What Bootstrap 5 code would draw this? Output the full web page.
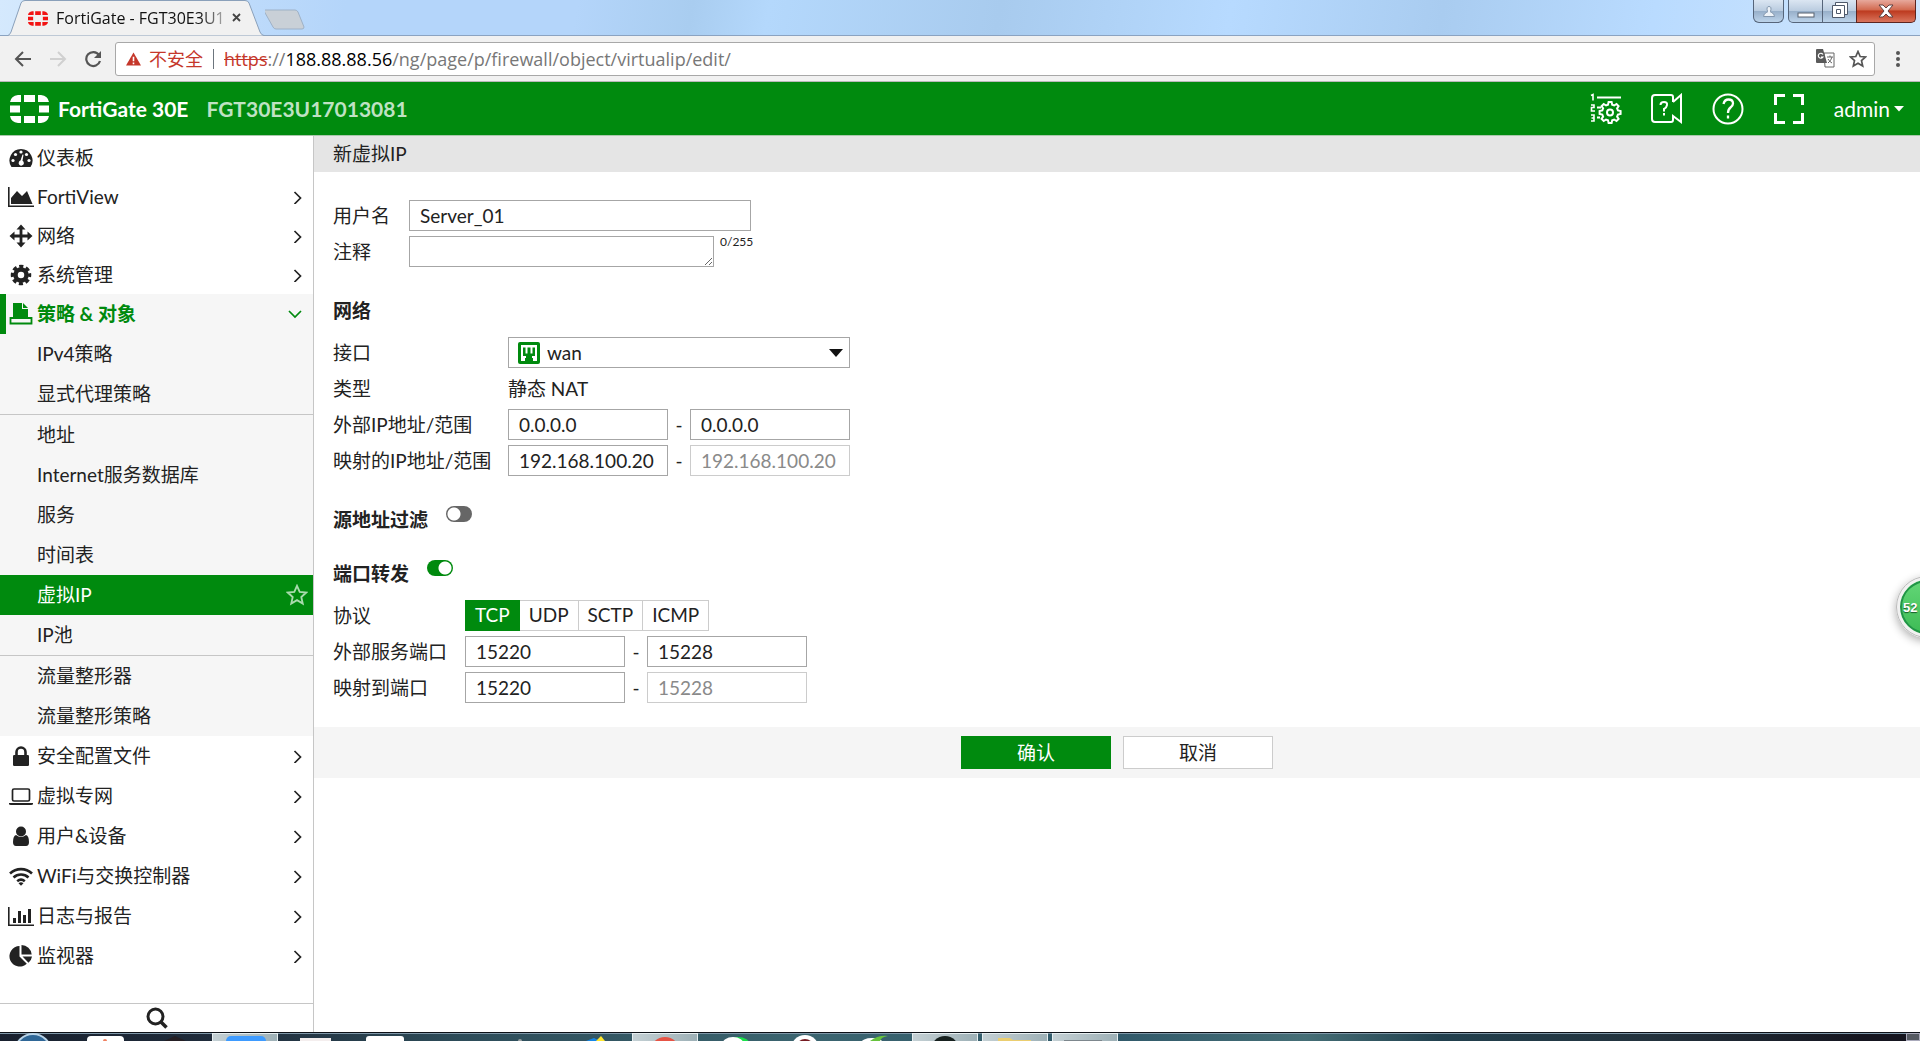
<!DOCTYPE html>
<html lang="zh-CN">
<head>
<meta charset="utf-8">
<meta name="viewport" content="width=device-width, initial-scale=1">
<title>FortiGate - FGT30E3U17013081</title>
<link href="https://cdn.jsdelivr.net/npm/bootstrap@5.3.0/dist/css/bootstrap.min.css" rel="stylesheet">
<style>
:root{--fg:#008a0e;--ink:#222;--line:#c6c6c6}
body{font-family:Lato,"Noto Sans CJK SC",sans-serif;font-size:19px;line-height:24px;color:var(--ink)}
svg{display:block;flex:none}
button{font-family:inherit}
/* browser chrome */
.chrome-ui{font-family:"Open Sans","Noto Sans CJK SC",sans-serif}
.tab-strip{height:36px;background:linear-gradient(100deg,#d5e9fd 0,#b4d5fa 18%,#b4d5fa 30%,#a9cdf0 36%,#b4d8fc 40%,#a8cbee 52%,#b7daff 64%,#a9ccf0 75%,#b9dbff 86%,#d0e6fd 100%);border-bottom:1px solid #8ba3c1}
.browser-tab{width:258px;height:36px;margin-left:7px;margin-bottom:-1px}
.browser-tab>svg:first-child{left:0;top:0}
.tab-title{font-size:16px;color:#111;white-space:nowrap;width:167px;-webkit-mask-image:linear-gradient(90deg,#000 86%,#0005 100%)}
.win-btn{height:23px;border:1px solid #56657a;border-top:0;background:linear-gradient(#dbe6f2,#b9cbdf 50%,#97afc9 51%,#bcd3ea);padding:0}
.win-close{background:linear-gradient(#e7a99c,#d2694f 45%,#bd3a1f 50%,#d9745c);border-color:#5c2520;width:60px;border-radius:0 0 5px 0}
.tool-bar{height:46px;background:#f1f1f1;border-bottom:1px solid #b9b9b9}
.address-box{height:34px;border:1px solid #a8a8a8;border-radius:3px;font-size:18px;background:#fff}
.plain-btn{border:0;background:none;padding:0;color:inherit}
/* product header */
.top-head{height:54px;background:var(--fg);border-bottom:1px solid #a9c8ab;color:#fff;font-size:21px}
.serial{color:#bfe2c3}
/* sidebar */
.side{width:314px;border-right:1px solid var(--line);background:#fff}
.side a{color:var(--ink);text-decoration:none;display:flex;align-items:center;height:40px;white-space:nowrap}
.side a.top-item{padding:0 11px 0 8px}
.side .first-items{padding-top:2px}
.side .first-items a{height:39px}
.ico{width:26px;height:26px;margin-right:3px}
.side .sub-items{background:#f6f6f6}
.side .sub-items a{padding-left:37px}
.side .sub-items ul+ul{border-top:1px solid var(--line)}
.side a.open-item{background:#f6f6f6;color:var(--fg);font-weight:700;border-left:6px solid var(--fg);padding-left:2px}
.side .sub-items a.current{background:var(--fg);color:#fff;padding-right:5px}
.side-search{height:29px}
/* content */
.page-title{height:36px;background:#e5e5e5;padding:0 19px;font-size:19px;font-weight:400}
.form-body{padding:28px 19px 24px}
.frow{display:flex;align-items:center;min-height:31px;margin-bottom:5px}
.frow>.lbl{flex:none}
.g1 .lbl{width:76px}.g2 .lbl{width:175px}.g3 .lbl{width:132px}
.fld{height:31px;border:1px solid #a6a6a6;border-radius:0;padding:0 10px;font-size:19px;color:var(--ink);background:#fff;line-height:24px}
.fld:disabled{border-color:#ccc;color:#8a8a8a;background:#fff;-webkit-text-fill-color:#8a8a8a;opacity:1}
.w-long{width:342px}.w-half{width:160px}
.fld-note{width:305px;height:31px;resize:both}
.count{font-size:12px;line-height:12px;margin-left:6px}
.dash{width:22px;text-align:center}
.sect{font-size:19px;line-height:28px;font-weight:700;margin:0}
.gap-sect{margin-top:30px}
.gap-switch{margin-top:26px}
select.fld{appearance:none;padding-left:38px}
.sel-ico{left:10px;top:5px}.sel-caret{right:7px;top:12px}
.tog.tog{appearance:none;width:26px;height:16px;border-radius:8px;background:radial-gradient(circle at 8px 8px,#fff 6px,#666 7px);margin:0 0 0 18px}
.tog.tog:checked{background:radial-gradient(circle at 18px 8px,#fff 6px,var(--fg) 7px)}
.proto .btn{height:31px;border:1px solid #ccc;border-radius:0;font-size:19px;line-height:24px;padding:2px 9px;color:var(--ink);background:#fff}
.proto .btn-check:checked+.btn{background:var(--fg);border-color:var(--fg);color:#fff}
.foot-bar{height:51px;background:#f5f5f5;gap:12px}
.foot-bar .btn{width:150px;height:33px;border-radius:0;font-size:19px;line-height:24px;padding:0}
.btn-ok{background:var(--fg);color:#fff}.btn-no{background:#fff;border:1px solid #ccc;color:var(--ink)}
/* floating meter and task bar */
.meter{right:-38px;top:576px;width:62px;height:62px;border-radius:50%;border:4px solid #f1f1f1;outline:1px solid #bbb;outline-offset:-1px;background:linear-gradient(#63d777,#3dbb55);box-shadow:0 3px 10px #0005,inset 0 0 0 2px #219447;color:#fff;font:700 13px "Liberation Sans",sans-serif;text-align:left;padding:0 0 0 3px;text-shadow:0 1px 1px #165b28}
.task-bar{height:9px;background:linear-gradient(90deg,#18202e 0,#202d3c 12%,#2d4c59 24%,#3b6570 42%,#30596a 58%,#456e76 68%,#21404e 75%,#23323d 86%,#15151f 97%);border-top:1px solid #0c1016;box-shadow:inset 0 1px #7f97a8}
.task-bar button{width:66px;height:8px;margin:0 2px;padding:0;background:none;border:0}
.task-bar button.run{background:linear-gradient(90deg,#c4d0d4,#9db0b6);border:1px solid #e6eef0;border-bottom:0}
.task-bar button.run svg{margin-left:-1px}
.task-bar button.desk{width:14px;margin:0 0 0 auto;background:#555a62;border:1px solid #aab}
</style>
<script src="https://cdn.jsdelivr.net/npm/bootstrap@5.3.0/dist/js/bootstrap.bundle.min.js"></script>
</head>
<body class="vh-100 d-flex flex-column overflow-hidden position-relative">
<svg width="0" height="0" class="position-absolute" aria-hidden="true">
  <symbol id="chev" viewBox="0 0 10 14"><path d="M2.500 2l6 6-6 6" fill="none" stroke="#222" stroke-width="1.700"/></symbol>
  <symbol id="forti" viewBox="0 0 39 28"><path d="M8 0h3v7H0Q1 1 8 0zM14 0h11v7H14zM28 0h3q7 1 8 7H28zM0 10.500h10v7H0zM29 10.500h10v7H29zM0 21h11v7H8q-7-1-8-7zM14 21h11v7H14zM28 21h11q-1 6-8 7h-3z" fill="currentColor"/></symbol>
</svg>

<div class="chrome-ui flex-shrink-0">
  <div class="tab-strip d-flex align-items-start">
    <div class="browser-tab position-relative d-flex align-items-center flex-shrink-0">
      <svg class="position-absolute" width="258" height="36"><path d="M0 36Q3 35 4 32L14 3Q15 .5 18 .5H238Q241 .5 242 3L253 32Q254 35 258 36z" fill="#f1f1f1" stroke="#8aa0ba"/></svg>
      <div class="position-relative d-flex align-items-center" style="padding-left:21px">
        <svg width="20" height="15"><use href="#forti" style="color:#f21313"/></svg>
        <span class="tab-title ms-2">FortiGate - FGT30E3U1</span>
        <button class="plain-btn ms-2" aria-label="关闭标签页"><svg width="12" height="12"><path d="M2 2l7 7M9 2l-7 7" stroke="#444" stroke-width="1.800"/></svg></button>
      </div>
    </div>
    <button class="plain-btn pt-2" aria-label="新标签页"><svg width="42" height="22"><path d="M1 2h30q2 0 3 2l6 15q0 2-2 2H12q-2 0-3-2L0 3z" transform="translate(-1)" fill="#c9d0d7" stroke="#9eb1c6"/></svg></button>
    <div class="ms-auto d-flex me-1">
      <button class="win-btn rounded-bottom me-1" style="width:31px" aria-label="用户"><svg class="mx-auto" width="14" height="14"><path d="M1.500 12.500q0-3 3-4 1 0 1-1-1.500-5 1.500-5t1.500 5q0 1 1 1 3 1 3 4z" fill="#eef3f8" stroke="#8296ad"/></svg></button>
      <button class="win-btn" style="width:35px;border-radius:0 0 0 5px" aria-label="最小化"><svg class="mx-auto" width="18" height="18"><rect x="1" y="11" width="16" height="4" fill="#fff" stroke="#56606e"/></svg></button>
      <button class="win-btn border-start-0 border-end-0" style="width:33px" aria-label="还原"><svg class="mx-auto" width="20" height="20"><path d="M5.500 1.500h12v12h-12z" fill="#fff" stroke="#4f596a"/><path d="M2.500 4.500h12v12h-12zM6.500 8.500h4v4h-4z" fill="#fff" stroke="#4f596a"/></svg></button>
      <button class="win-btn win-close" aria-label="关闭"><svg class="mx-auto" width="18" height="18"><path d="M2 3h4l3 3 3-3h4l-5 6 5 6h-4l-3-3-3 3H2l5-6z" fill="#fff" stroke="#5e4040"/></svg></button>
    </div>
  </div>
  <div class="tool-bar d-flex align-items-center">
    <button class="plain-btn" style="margin-left:14px" aria-label="后退"><svg width="18" height="18"><path d="M17 9H2M9 2L2 9l7 7" fill="none" stroke="#555" stroke-width="2"/></svg></button>
    <button class="plain-btn" style="margin-left:18px" disabled aria-label="前进"><svg width="18" height="18"><path d="M0 9h15M8 2l7 7-7 7" fill="none" stroke="#d0d0d0" stroke-width="2"/></svg></button>
    <button class="plain-btn" style="margin-left:16px" aria-label="重新加载"><svg width="18" height="18"><path d="M15 5A7 7 0 1 0 16 11" fill="none" stroke="#555" stroke-width="2.200"/><path d="M17 1v7h-7z" fill="#555"/></svg></button>
    <div class="address-box d-flex align-items-center flex-grow-1 ps-2" style="margin-left:13px">
      <svg style="margin:0 8px 0 2px" width="15" height="14" viewBox="0 0 17 15"><path d="M8.500 0L17 15H0z" fill="#c5372a"/><path d="M8.500 5v5M8.500 11.500v2" stroke="#fff" stroke-width="1.800"/></svg>
      <span style="color:#c5372a">不安全</span>
      <span class="border-start border-secondary" style="height:20px;margin:0 10px"></span>
      <span class="text-nowrap" style="color:#777"><s style="color:#c5372a">https</s>://<span class="text-black">188.88.88.56</span>/ng/page/p/firewall/object/virtualip/edit/</span>
      <button class="plain-btn ms-auto" aria-label="翻译"><svg width="19" height="19"><path d="M8 4h10v14H9z" fill="#fff" stroke="#666"/><path d="M1 0h6l4 14H1q-1 0-1-1V1q0-1 1-1z" fill="#5a5a5a"/><path d="M7 5.500A2.500 2.500 0 1 0 7 8H5" fill="none" stroke="#fff" stroke-width="1.200"/><path d="M11 8h6M14 6.500V8M16 8q-1 4-4 6M12 10q2 3 4 4" fill="none" stroke="#666"/></svg></button>
      <button class="plain-btn" style="margin:0 7px 0 14px" aria-label="收藏"><svg width="18" height="18" viewBox="0 0 18 18"><path d="M9 1.500l2.200 5 5.300.5-4 3.600 1.200 5.400L9 13.200 4.300 16l1.200-5.400-4-3.600 5.300-.5z" fill="none" stroke="#555" stroke-width="1.700"/></svg></button>
    </div>
    <button class="plain-btn" style="margin:0 19px 0 20px" aria-label="菜单"><svg width="6" height="18" fill="#555"><circle cx="3" cy="3" r="2"/><circle cx="3" cy="9" r="2"/><circle cx="3" cy="15" r="2"/></svg></button>
  </div>
</div>

<header class="top-head d-flex align-items-center flex-shrink-0 fw-bold">
  <svg style="margin-left:10px" width="39" height="28"><use href="#forti"/></svg>
  <span style="margin-left:9px">FortiGate 30E</span>
  <span class="serial" style="margin-left:18px">FGT30E3U17013081</span>
  <div class="ms-auto d-flex align-items-center" style="gap:29px;margin-right:16px">
    <button class="plain-btn" aria-label="设置"><svg width="32" height="32" viewBox="0 0 32 32" fill="none" stroke="#fff"><path d="M7 4.500h24M7 14.500h4M7 24.500h3" stroke-width="2"/><path d="M1 2.500l2-1v6M1 12h3v2.500H1.500V18H5M1 22h3v6H1M1.500 25H4" stroke-width="1.600"/><path d="M18.600 9h3l.6 2.700 2 .8 2.300-1.500 2.100 2.100-1.500 2.300.8 2 2.700.6v3l-2.700.6-.8 2 1.500 2.300-2.100 2.100-2.300-1.500-2 .8-.6 2.700h-3l-.6-2.700-2-.8-2.300 1.500-2.100-2.100 1.500-2.300-.8-2-2.700-.6v-3l2.700-.6.8-2-1.500-2.300 2.100-2.100 2.300 1.500 2-.8z" stroke-width="2"/><circle cx="20" cy="19.500" r="3" stroke-width="2"/></svg></button>
    <button class="plain-btn" aria-label="视频帮助"><svg width="32" height="32" viewBox="0 0 32 32" fill="none" stroke="#fff" stroke-width="2"><path d="M22 9V4q0-2-2-2H4Q1 2 1 5v21q0 3 3 3h16q2 0 2-2v-4l8 6V2l-8 7"/><path d="M9.500 12q0-3 3.500-3t3 3-3 4v2.500M13 20v2.500"/></svg></button>
    <button class="plain-btn" aria-label="帮助"><svg width="32" height="32" viewBox="0 0 32 32" fill="none" stroke="#fff" stroke-width="2"><circle cx="16" cy="16" r="14.500"/><path d="M11.500 11q1-4.500 5-4.500 4.500 0 4.500 4 0 2-2.500 4T16 20M16 22.500v3" stroke-width="2.300"/></svg></button>
    <button class="plain-btn" aria-label="全屏"><svg width="32" height="32" viewBox="0 0 32 32" fill="none" stroke="#fff" stroke-width="3"><path d="M2.500 12V2.500H12M20 2.500h9.500V12M29.500 20v9.500H20M12 29.500H2.500V20"/></svg></button>
    <button class="plain-btn d-flex align-items-center">admin<svg class="ms-1" width="10" height="6"><path d="M0 0h10L5 5.500z" fill="#fff"/></svg></button>
  </div>
</header>

<div class="d-flex flex-grow-1 overflow-hidden">
  <nav class="side d-flex flex-column flex-shrink-0" aria-label="主导航">
    <div class="first-items">
      <a class="top-item" href="#"><svg class="ico" viewBox="0 0 26 26"><path d="M13 4A11.500 11.500 0 0 0 3.500 22h19A11.500 11.500 0 0 0 13 4z" fill="#222"/><g fill="#fff"><circle cx="5" cy="15.500" r="1.600"/><circle cx="7.500" cy="9.500" r="1.600"/><circle cx="13" cy="7" r="1.600"/><circle cx="18.500" cy="9.500" r="1.600"/><circle cx="21" cy="15.500" r="1.600"/><path d="M14.500 9.500l1 .3-1 6a2.600 2.600 0 1 1-2-.2z"/></g></svg>仪表板</a>
      <a class="top-item" href="#"><svg class="ico" viewBox="0 0 26 26"><path d="M.8 3v19.200H26" fill="none" stroke="#222" stroke-width="1.600"/><path d="M3 20v-6l6-7 5 5 5-5 5.500 13z" fill="#222"/></svg>FortiView<svg class="ms-auto" width="10" height="14"><use href="#chev"/></svg></a>
      <a class="top-item" href="#"><svg class="ico" viewBox="0 0 26 26"><path d="M13 4v18M4 13h18" stroke="#222" stroke-width="2.800"/><path d="M13 1.500l4.500 5h-9zM13 24.500l4.500-5h-9zM1.500 13l5-4.500v9zM24.500 13l-5-4.500v9z" fill="#222"/></svg>网络<svg class="ms-auto" width="10" height="14"><use href="#chev"/></svg></a>
      <a class="top-item" href="#"><svg class="ico" viewBox="0 0 26 26"><circle cx="13" cy="13" r="5.500" fill="none" stroke="#222" stroke-width="4.500"/><circle cx="13" cy="13" r="8.500" fill="none" stroke="#222" stroke-width="3.500" stroke-dasharray="4 2.676" stroke-dashoffset="2"/></svg>系统管理<svg class="ms-auto" width="10" height="14"><use href="#chev"/></svg></a>
    </div>
    <a class="top-item open-item" href="#"><svg class="ico" viewBox="0 0 26 26"><path d="M5 2h9v6h6v8H5z" fill="#008a0e"/><path d="M15 2l5 5h-5z" fill="#008a0e"/><path d="M2.500 17h21v5.500h-21z" fill="#f6f6f6" stroke="#008a0e" stroke-width="1.800"/></svg>策略 &amp; 对象<svg class="ms-auto" width="14" height="9"><path d="M1 1l6 6 6-6" fill="none" stroke="#008a0e" stroke-width="1.700"/></svg></a>
    <div class="sub-items">
      <ul class="list-unstyled m-0"><li><a href="#">IPv4策略</a></li><li><a href="#">显式代理策略</a></li></ul>
      <ul class="list-unstyled m-0"><li><a href="#">地址</a></li><li><a href="#">Internet服务数据库</a></li><li><a href="#">服务</a></li><li><a href="#">时间表</a></li>
        <li><a class="current" href="#" aria-current="page">虚拟IP<svg class="ms-auto" width="22" height="22" viewBox="0 0 18 18"><path d="M9 1.500l2.200 5 5.300.5-4 3.600 1.200 5.400L9 13.200 4.300 16l1.200-5.400-4-3.600 5.300-.5z" fill="none" stroke="#a9dbad" stroke-width="1.500"/></svg></a></li><li><a href="#">IP池</a></li></ul>
      <ul class="list-unstyled m-0"><li><a href="#">流量整形器</a></li><li><a href="#">流量整形策略</a></li></ul>
    </div>
    <a class="top-item" href="#"><svg class="ico" viewBox="0 0 26 26"><path d="M8.500 12V9a4.500 4.500 0 0 1 9 0v3" fill="none" stroke="#222" stroke-width="2.600"/><rect x="5" y="12" width="16" height="11" rx="1.200" fill="#222"/></svg>安全配置文件<svg class="ms-auto" width="10" height="14"><use href="#chev"/></svg></a>
    <a class="top-item" href="#"><svg class="ico" viewBox="0 0 26 26"><rect x="4.500" y="6" width="17" height="12" rx="1.500" fill="none" stroke="#222" stroke-width="1.700"/><path d="M1 20h24v1q0 1-2 1H3q-2 0-2-1z" fill="#222"/></svg>虚拟专网<svg class="ms-auto" width="10" height="14"><use href="#chev"/></svg></a>
    <a class="top-item" href="#"><svg class="ico" viewBox="0 0 26 26" fill="#222"><circle cx="13" cy="8.500" r="5"/><path d="M8 12q-3 1-3 7 0 4 3 4h10q3 0 3-4 0-6-3-7-5 4-10 0z"/></svg>用户&amp;设备<svg class="ms-auto" width="10" height="14"><use href="#chev"/></svg></a>
    <a class="top-item" href="#"><svg class="ico" viewBox="0 0 26 26" fill="none" stroke="#222" stroke-width="2.600"><path d="M2 10.500a16 16 0 0 1 22 0M5.500 14.500a11 11 0 0 1 15 0M9.200 18.200a6 6 0 0 1 7.600 0"/><path d="M10.500 20.300L13 22.800l2.500-2.500q-2.500-2-5 0z" fill="#222" stroke="none"/></svg>WiFi与交换控制器<svg class="ms-auto" width="10" height="14"><use href="#chev"/></svg></a>
    <a class="top-item" href="#"><svg class="ico" viewBox="0 0 26 26" fill="none" stroke="#222"><path d="M.8 4v18.200H26" stroke-width="1.600"/><path d="M6.500 20v-5M11.500 20V8M16.500 20v-8M21.500 20V6" stroke-width="3"/></svg>日志与报告<svg class="ms-auto" width="10" height="14"><use href="#chev"/></svg></a>
    <a class="top-item" href="#"><svg class="ico" viewBox="0 0 26 26" fill="#222"><path d="M11.500 3v10.500l7.300 7.300A10.300 10.300 0 1 1 11.500 3z"/><path d="M13.500 2a10.500 10.500 0 0 1 10.200 9.500H13.500zM14.500 13.500h9.500a10 10 0 0 1-3.500 6.300z"/></svg>监视器<svg class="ms-auto" width="10" height="14"><use href="#chev"/></svg></a>
    <button class="plain-btn side-search border-top mt-auto d-flex justify-content-center align-items-center" style="--bs-border-color:#c6c6c6" aria-label="搜索"><svg width="22" height="22"><circle cx="9.500" cy="9.500" r="7.500" fill="none" stroke="#222" stroke-width="3"/><path d="M14.500 14.500l6 6" stroke="#222" stroke-width="3.500"/></svg></button>
  </nav>

  <main class="flex-grow-1">
    <h1 class="page-title d-flex align-items-center m-0">新虚拟IP</h1>
    <form>
      <div class="form-body">
        <div class="g1">
          <div class="frow"><label class="lbl" for="nm">用户名</label><input class="fld w-long" id="nm" value="Server_01"></div>
          <div class="frow"><label class="lbl" for="nt">注释</label><textarea class="fld fld-note" id="nt"></textarea><span class="count align-self-start">0/255</span></div>
        </div>
        <h2 class="sect gap-sect mb-2 pb-1">网络</h2>
        <div class="g2">
          <div class="frow"><label class="lbl" for="if">接口</label>
            <div class="position-relative"><select class="fld w-long" id="if"><option>wan</option></select>
              <svg class="position-absolute sel-ico pe-none" width="22" height="22"><rect width="22" height="22" rx="2" fill="#008a0e"/><path d="M3 3h16v16h-4v-3h-1v-1h-6v1h-1v3H3z" fill="#fff"/><path d="M5 5.500v8.500h3v5h6v-5h3V5.500h-2.500v6h-2v-6h-3v6h-2v-6z" fill="#008a0e"/></svg>
              <svg class="position-absolute sel-caret pe-none" width="14" height="8"><path d="M0 0h14L7 8z" fill="#111"/></svg></div></div>
          <div class="frow"><span class="lbl">类型</span><span>静态 NAT</span></div>
          <div class="frow"><label class="lbl" for="e1">外部IP地址/范围</label><input class="fld w-half" id="e1" value="0.0.0.0"><span class="dash">-</span><input class="fld w-half" aria-label="外部IP结束" value="0.0.0.0"></div>
          <div class="frow"><label class="lbl" for="m1">映射的IP地址/范围</label><input class="fld w-half" id="m1" value="192.168.100.20"><span class="dash">-</span><input class="fld w-half" aria-label="映射IP结束" value="192.168.100.20" disabled></div>
        </div>
        <div class="d-flex gap-sect"><label class="sect" for="sf">源地址过滤</label><input class="tog form-check-input border-0" role="switch" type="checkbox" id="sf"></div>
        <div class="d-flex gap-switch mb-2 pb-1"><label class="sect" for="pf">端口转发</label><input class="tog form-check-input border-0" role="switch" type="checkbox" id="pf" checked></div>
        <div class="g3">
          <div class="frow"><span class="lbl">协议</span>
            <div class="btn-group proto" role="group" aria-label="协议">
              <input type="radio" class="btn-check" name="pr" id="p1" checked><label class="btn" for="p1">TCP</label>
              <input type="radio" class="btn-check" name="pr" id="p2"><label class="btn" for="p2">UDP</label>
              <input type="radio" class="btn-check" name="pr" id="p3"><label class="btn" for="p3">SCTP</label>
              <input type="radio" class="btn-check" name="pr" id="p4"><label class="btn" for="p4">ICMP</label>
            </div></div>
          <div class="frow"><label class="lbl" for="x1">外部服务端口</label><input class="fld w-half" id="x1" value="15220"><span class="dash">-</span><input class="fld w-half" aria-label="外部端口结束" value="15228"></div>
          <div class="frow mb-0"><label class="lbl" for="y1">映射到端口</label><input class="fld w-half" id="y1" value="15220"><span class="dash">-</span><input class="fld w-half" aria-label="映射端口结束" value="15228" disabled></div>
        </div>
      </div>
      <div class="foot-bar d-flex justify-content-center align-items-center"><button type="button" class="btn btn-ok">确认</button><button type="button" class="btn btn-no">取消</button></div>
    </form>
  </main>
</div>

<button class="meter position-absolute">52</button>

<div class="task-bar d-flex flex-shrink-0 overflow-hidden">
  <button aria-label="开始"><svg width="66" height="8"><circle cx="31" cy="19" r="18" fill="#2f6797" stroke="#b9d4e8" stroke-width="2"/></svg></button>
  <button aria-label="应用"><svg width="66" height="8"><rect x="15" y="3" width="37" height="12" rx="4" fill="#fff"/><circle cx="33" cy="8" r="2" fill="#f08060"/></svg></button>
  <button aria-label="应用"><svg width="66" height="8"><path d="M22 8l11-5 11 5z" fill="#251f24"/></svg></button>
  <button class="run" aria-label="应用"><svg width="66" height="8"><rect x="14" y="2" width="40" height="14" rx="5" fill="#3e9bff"/></svg></button>
  <button aria-label="应用"><svg width="66" height="8"><path d="M18 5h31v4H18z" fill="#f4eeee"/></svg></button>
  <button aria-label="应用"><svg width="66" height="8"><rect x="14" y="3" width="38" height="12" rx="3" fill="#fff"/></svg></button>
  <button aria-label="应用"></button>
  <button aria-label="应用"><svg width="66" height="8"><circle cx="28" cy="8" r="2" fill="#9ba2a4"/></svg></button>
  <button aria-label="应用"><svg width="66" height="8"><path d="M24 8l8-3 6 3z" fill="#1687e8"/><path d="M34 8l5-5 4 5z" fill="#ffe72e"/></svg></button>
  <button class="run" aria-label="浏览器"><svg width="66" height="8"><circle cx="33" cy="18" r="15" fill="#e65445"/></svg></button>
  <button aria-label="应用"><svg width="66" height="8"><ellipse cx="36" cy="12" rx="12" ry="8" fill="#1be04a"/><ellipse cx="31" cy="12" rx="11" ry="8" fill="#fff"/></svg></button>
  <button aria-label="应用"><svg width="66" height="8"><circle cx="33" cy="16" r="14" fill="#fff"/><circle cx="33" cy="15" r="9" fill="#761c23"/></svg></button>
  <button aria-label="应用"><svg width="66" height="8"><ellipse cx="30" cy="10" rx="11" ry="5" fill="#fff"/><path d="M28 8q8-6 18-5-7 1-8 5z" fill="#66c23d"/></svg></button>
  <button class="run" aria-label="应用"><svg width="66" height="8"><circle cx="33" cy="16" r="14" fill="#17211f"/></svg></button>
  <button class="run" aria-label="文件夹"><svg width="66" height="8"><path d="M16 8V4h12l3 2h18v3z" fill="#ebce70"/></svg></button>
  <button class="run" aria-label="应用"><svg width="66" height="8"><path d="M12 7h38" stroke="#7d878d" stroke-width="2"/></svg></button>
  <button class="desk" aria-label="显示桌面"></button>
</div>
</body>
</html>
